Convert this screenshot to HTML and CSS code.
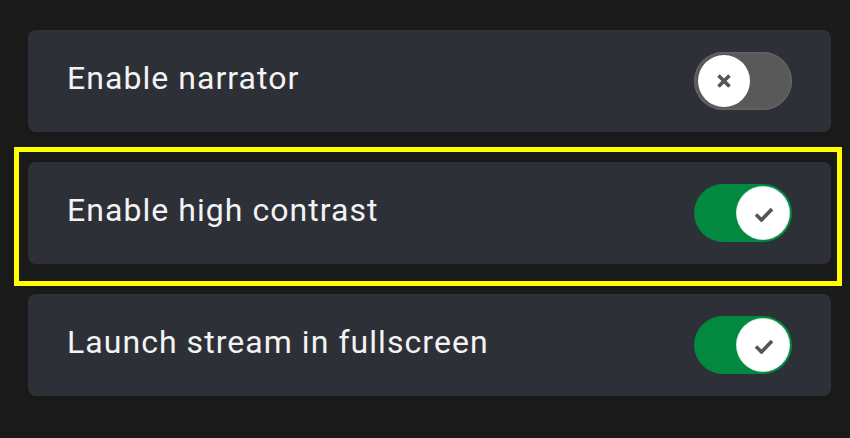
FILE: index.html
```html
<!DOCTYPE html>
<html lang="en">
<head>
<meta charset="utf-8">
<title>Accessibility settings</title>
<link rel="stylesheet" href="styles.css">
</head>
<body>
<main class="settings">
  <div class="row">
    <span class="label">Enable narrator</span>
    <span class="toggle off">
      <span class="knob">
        <svg viewBox="0 0 16 16" width="16" height="16"><path d="M2.5 2.5 L13.5 13.5 M13.5 2.5 L2.5 13.5" stroke="#555" stroke-width="3.6" stroke-linecap="butt" fill="none"/></svg>
      </span>
    </span>
  </div>
  <div class="row focused">
    <span class="label">Enable high contrast</span>
    <span class="toggle on">
      <span class="knob">
        <svg viewBox="0 0 20 16" width="20" height="16"><path d="M2 8.5 L7.5 14 L18 3" stroke="#555" stroke-width="3.6" stroke-linecap="butt" stroke-linejoin="miter" fill="none"/></svg>
      </span>
    </span>
    <span class="focus-ring"></span>
  </div>
  <div class="row">
    <span class="label">Launch stream in fullscreen</span>
    <span class="toggle on">
      <span class="knob">
        <svg viewBox="0 0 20 16" width="20" height="16"><path d="M2 8.5 L7.5 14 L18 3" stroke="#555" stroke-width="3.6" stroke-linecap="butt" stroke-linejoin="miter" fill="none"/></svg>
      </span>
    </span>
  </div>
</main>
</body>
</html>
```

FILE: styles.css
```css
html, body {
  margin: 0;
  padding: 0;
  background: #1a1a1a;
}

body {
  font-family: Roboto, "Liberation Sans", sans-serif;
  width: 850px;
  height: 438px;
  overflow: hidden;
}

.settings {
  display: flex;
  flex-direction: column;
  gap: 30px;
  padding: 30px 19px 0 28px;
}

.row {
  position: relative;
  display: flex;
  align-items: center;
  justify-content: space-between;
  height: 102px;
  box-sizing: border-box;
  padding: 0 39px 0 39px;
  background: #2e3038;
  border-radius: 8px;
}

.label {
  color: #f3f3f3;
  font-size: 32px;
  line-height: 32px;
  margin-bottom: 7px;
  letter-spacing: 1.05px;
}

.toggle {
  display: flex;
  align-items: center;
  width: 98px;
  height: 58px;
  box-sizing: border-box;
  border-radius: 29px;
  padding: 0 3px 0 4px;
}

.toggle.off {
  background: #595959;
  box-shadow: inset 0 0 0 1.5px #626262;
  justify-content: flex-start;
}

.toggle.on {
  background: #03883f;
  justify-content: flex-end;
}

.knob {
  width: 52px;
  height: 52px;
  border-radius: 50%;
  background: #ffffff;
  display: flex;
  align-items: center;
  justify-content: center;
}

.toggle.on .knob {
  box-shadow: 0 0 0 1px #d8eee0;
}

.toggle.on .knob svg {
  margin-left: 2px;
  margin-top: 1px;
}

.focus-ring {
  position: absolute;
  top: -15px;
  left: -14px;
  right: -11px;
  bottom: -22px;
  border: 5px solid #ffff00;
  pointer-events: none;
}
```
